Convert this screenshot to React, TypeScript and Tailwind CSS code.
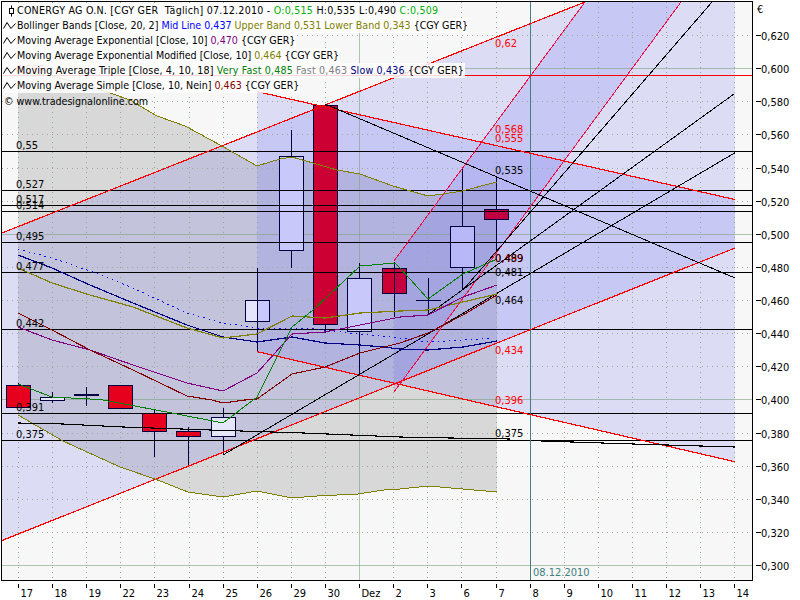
import React from 'react';

// day columns on the time axis
const days = ['17', '18', '19', '22', '23', '24', '25', '26', '29', '30', 'Dez', '2', '3', '6', '7', '8', '9', '10', '11', '12', '13', '14'];
const dayX = (i: number) => Math.floor(18.4 + 34.12 * i) + 0.5;
const priceY = (k: number) => Math.round(565 - 33.125 * k) + 0.5;
const prices = ['0,300', '0,320', '0,340', '0,360', '0,380', '0,400', '0,420', '0,440', '0,460', '0,480', '0,500', '0,520', '0,540', '0,560', '0,580', '0,600', '0,620'];

const OVERLAY = 'rgba(100,100,240,0.178)';

const upperBand = '18,72 52,76 93,87 130,100 157,116 185,126 222,146 257,166 280,159 292,157 313,163 337,170 360,174 393,186 428,196 443,194 462,191 497,182';
const lowerBand = '497,492 463,489 428,486 400,489 390,489 358,494 317,496 292,498 257,491 223,497 188,492 155,479 120,467 63,441 18,415';

const curves: { stroke: string; points: string; width?: number; dash?: string }[] = [
  { stroke: '#808000', points: upperBand },
  { stroke: '#808000', points: lowerBand },
  { stroke: '#000080', width: 1.2, points: '18,255 52,268 90,285 133,303 187,325 223,337 257,342 292,337 325,343 360,345 383,347 400,349 428,350 463,347 497,341' },
  { stroke: '#0000ff', dash: '1.5 4', points: '18,249 52,258 90,271 133,288 187,313 223,323 257,328 307,328 350,333 400,338 428,342 463,340 493,338' },
  { stroke: '#808000', width: 1.2, points: '18,268 52,283 90,295 133,307 187,328 223,338 257,334 292,316 325,318 360,313 400,311 428,310 463,302 497,294' },
  { stroke: '#800080', width: 1.1, points: '18,327 52,340 90,350 133,365 187,383 223,391 257,373 292,334 325,332 360,325 400,317 428,315 463,297 497,285' },
  { stroke: '#800000', width: 1.1, points: '18,313 52,330 90,350 133,370 187,396 212,400 223,403 245,400 257,399 292,374 325,367 360,353 400,343 428,333 463,315 497,295' },
  { stroke: '#008000', points: '18,384 52,397 90,399 103,400 172,413 223,423 257,397 292,327 313,310 360,266 395,263 400,268 428,299 463,274 497,259' },
  { stroke: '#000000', width: 1.1, points: '18,423 63,424 123,427 210,430 303,433 400,437 450,438 510,439' },
  { stroke: '#000000', width: 1.1, points: '541,441 633,444 735,447' },
];

const trendLines: { stroke: string; width: number; from: [number, number]; to: [number, number] }[] = [
  { stroke: '#ff0000', width: 1.2, from: [2, 233], to: [585, 2] },
  { stroke: '#ff0000', width: 1.2, from: [2, 540.5], to: [735, 248] },
  { stroke: '#ff0000', width: 1.2, from: [257, 91.6], to: [735, 199.5] },
  { stroke: '#ff0000', width: 1.2, from: [257, 351.6], to: [735, 461.7] },
  { stroke: '#f01048', width: 1, from: [394, 261], to: [585, 2] },
  { stroke: '#f01048', width: 1, from: [394, 392], to: [681, 2] },
  { stroke: '#000000', width: 1, from: [223, 455], to: [735, 152.7] },
  { stroke: '#000000', width: 1, from: [429, 314], to: [734, 94] },
  { stroke: '#000000', width: 1, from: [463, 290], to: [712, 2] },
  { stroke: '#000000', width: 1, from: [325, 104], to: [735, 278] },
];

const levels = [151.5, 190.5, 205.5, 211.5, 242.5, 272.5, 329.5, 413.5, 440.5];

const chartLabels: { x: number; y: number; text: string; red?: boolean }[] = [
  { x: 16, y: 73, text: '0,596', red: true },
  { x: 16, y: 149, text: '0,55' },
  { x: 16, y: 188, text: '0,527' },
  { x: 16, y: 203, text: '0,517' },
  { x: 16, y: 209, text: '0,514' },
  { x: 16, y: 240, text: '0,495' },
  { x: 16, y: 270, text: '0,477' },
  { x: 16, y: 327, text: '0,442' },
  { x: 16, y: 411, text: '0,391' },
  { x: 16, y: 438, text: '0,375' },
  { x: 495, y: 47, text: '0,62', red: true },
  { x: 495, y: 133, text: '0,568', red: true },
  { x: 495, y: 142, text: '0,555', red: true },
  { x: 495, y: 174, text: '0,535' },
  { x: 495, y: 262, text: '0,499', red: true },
  { x: 495, y: 262, text: '0,489' },
  { x: 495, y: 276, text: '0,481' },
  { x: 495, y: 304, text: '0,464' },
  { x: 495, y: 354, text: '0,434', red: true },
  { x: 495, y: 404, text: '0,396', red: true },
  { x: 495, y: 437, text: '0,375' },
];

type Candle = { x: number; top: number; bottom: number; high: number; low: number; fill: string; half?: string };

const candles: Candle[] = [
  { x: 18, top: 385, bottom: 407, high: 383, low: 407, fill: '#e6001e' },
  { x: 52, top: 397, bottom: 400, high: 392, low: 403, fill: '#e6e6fb' },
  { x: 86, top: 394, bottom: 395, high: 387, low: 406, fill: '#000000' },
  { x: 120, top: 385, bottom: 408, high: 385, low: 408, fill: '#e6001e' },
  { x: 154, top: 413, bottom: 431, high: 410, low: 457, fill: '#e6001e' },
  { x: 188, top: 431, bottom: 436, high: 427, low: 465, fill: '#e6001e' },
  { x: 223, top: 417, bottom: 436, high: 408, low: 455, fill: '#e6e6fb' },
  { x: 257, top: 300, bottom: 321, high: 268, low: 352, fill: '#c8c8fa', half: '#e4e4fc' },
  { x: 291, top: 156, bottom: 250, high: 130, low: 268, fill: '#c8c8fa' },
  { x: 325, top: 105, bottom: 324, high: 105, low: 333, fill: '#cc0033' },
  { x: 359, top: 278, bottom: 331, high: 263, low: 375, fill: '#c8c8fa' },
  { x: 394, top: 268, bottom: 293, high: 262, low: 317, fill: '#c40040', half: '#cc0033' },
  { x: 428, top: 300, bottom: 300, high: 278, low: 315, fill: '#000000' },
  { x: 462, top: 226, bottom: 267, high: 168, low: 290, fill: '#b8b8f8' },
  { x: 496, top: 209, bottom: 219, high: 177, low: 250, fill: '#c00040' },
];

const CandleMark: React.FC<{ c: Candle }> = ({ c }) => (
  <g shapeRendering="crispEdges">
    <line x1={c.x + 0.5} x2={c.x + 0.5} y1={c.high} y2={c.low} stroke="#000040" />
    {c.top === c.bottom ? (
      <line x1={c.x - 12} x2={c.x + 13} y1={c.top + 0.5} y2={c.top + 0.5} stroke="#000040" />
    ) : (
      <>
        {c.half && <rect x={c.x - 12} y={c.top} width={12} height={c.bottom - c.top} fill={c.half} />}
        <rect
          x={c.half ? c.x + 0.5 : c.x - 11.5}
          y={c.top + 0.5}
          width={c.half ? 12 : 24}
          height={c.bottom - c.top}
          fill={c.fill}
        />
        <rect x={c.x - 11.5} y={c.top + 0.5} width={24} height={c.bottom - c.top} fill="none" stroke="#000040" />
      </>
    )}
  </g>
);

const Squiggle = () => (
  <svg viewBox="0 0 14 15" className="w-[14px] h-[15px] shrink-0">
    <polyline points="0.5,10.5 4,4.5 8,10.5 12.5,5.5" fill="none" stroke="#000000" />
  </svg>
);

const LegendRow: React.FC<{ children: React.ReactNode }> = ({ children }) => (
  <div className="flex items-center h-[15px] w-fit pl-[1px] pr-[1px] bg-white/85 whitespace-pre">
    <Squiggle />
    <span>{children}</span>
  </div>
);

const Legend = () => (
  <div className="absolute top-px left-0 flex flex-col text-[10.6px] leading-[15px] text-black">
    <div className="flex items-center h-[15px] w-fit pl-[1px] pr-[1px] bg-white/85 whitespace-pre">
      <svg viewBox="0 0 14 15" className="w-[14px] h-[15px] shrink-0">
        <path d="M8.5 2.5V13.5" stroke="#000000" fill="none" />
        <rect x="6.5" y="5.5" width="4" height="5" fill="#ffffff" stroke="#000000" />
      </svg>
      <span className="tracking-[0.23px]">
        CONERGY AG O.N. [CGY GER  Täglich] 07.12.2010 - <span className="text-[#00b000]">O:0,515</span> H:0,535 L:0,490{' '}
        <span className="text-[#00b000]">C:0,509</span>
      </span>
    </div>
    <LegendRow>
      Bollinger Bands [Close, 20, 2] <span className="text-[#0000ff]">Mid Line 0,437</span>{' '}
      <span className="text-[#808000]">Upper Band 0,531 Lower Band 0,343</span> {'{CGY GER}'}
    </LegendRow>
    <LegendRow>
      Moving Average Exponential [Close, 10] <span className="text-[#800080]">0,470</span> {'{CGY GER}'}
    </LegendRow>
    <LegendRow>
      Moving Average Exponential Modified [Close, 10] <span className="text-[#808000]">0,464</span> {'{CGY GER}'}
    </LegendRow>
    <LegendRow>
      <span className="tracking-[0.17px]">
        Moving Average Triple [Close, 4, 10, 18] <span className="text-[#008000]">Very Fast 0,485</span>{' '}
        <span className="text-[#808080]">Fast 0,463</span> <span className="text-[#000080]">Slow 0,436</span> {'{CGY GER}'}
      </span>
    </LegendRow>
    <LegendRow>
      Moving Average Simple [Close, 10, Nein] <span className="text-[#800000]">0,463</span> {'{CGY GER}'}
    </LegendRow>
    <div className="h-[15px] mt-px pl-[2px] whitespace-pre">© www.tradesignalonline.com</div>
  </div>
);

const Plot = () => (
  <svg viewBox="2 2 750 578" className="absolute inset-0 w-[750px] h-[578px]">
    <polygon points={`${upperBand} ${lowerBand}`} fill="rgba(0,0,0,0.125)" />
    <polygon points="2,233 585,2 735,2 735,248 2,540.5" fill={OVERLAY} />
    <polygon points="257,91.6 735,199.5 735,461.7 257,351.6" fill={OVERLAY} />
    <polygon points="394,261 585,2 681,2 394,392" fill={OVERLAY} />

    <g shapeRendering="crispEdges">
      {days.map((d, i) =>
        d === 'Dez' || d === '8' ? null : (
          <line key={d} x1={dayX(i)} x2={dayX(i)} y1={2} y2={580} stroke="#90a890" strokeDasharray="1 4" />
        )
      )}
      {prices.map((p, k) =>
        k % 5 === 0 ? (
          <line key={p} x1={2} x2={752} y1={priceY(k)} y2={priceY(k)} stroke="#80a080" strokeOpacity={0.6} />
        ) : (
          <line key={p} x1={2} x2={752} y1={priceY(k)} y2={priceY(k)} stroke="#a0a8a0" strokeDasharray="1 4" />
        )
      )}
      <line x1={359.5} x2={359.5} y1={2} y2={580} stroke="#80a080" strokeOpacity={0.6} />
    </g>

    {candles.map((c) => (
      <CandleMark key={c.x} c={c} />
    ))}

    <g shapeRendering="crispEdges">
      <line x1={2} x2={752} y1={75.5} y2={75.5} stroke="#ff0000" />
      {levels.map((y) => (
        <line key={y} x1={2} x2={752} y1={y} y2={y} stroke="#000000" />
      ))}
      <line x1={530.5} x2={530.5} y1={2} y2={580} stroke="#408080" />
      {trendLines.map((l, i) => (
        <line key={i} x1={l.from[0]} y1={l.from[1]} x2={l.to[0]} y2={l.to[1]} stroke={l.stroke} strokeWidth={l.width} />
      ))}
      {curves.map((c, i) => (
        <polyline
          key={i}
          points={c.points}
          fill="none"
          stroke={c.stroke}
          strokeWidth={c.width ?? 1}
          strokeDasharray={c.dash}
        />
      ))}
    </g>

    {chartLabels.map((l, i) => (
      <text key={i} x={l.x} y={l.y} fontSize={11} fill={l.red ? '#ff0000' : '#000000'}>
        {l.text}
      </text>
    ))}
    <text x={533} y={576} fontSize={11} fill="#408080">
      08.12.2010
    </text>
  </svg>
);

const TimeAxis = () => (
  <svg viewBox="1 581 752 19" className="w-[752px] h-[19px]">
    {days.map((d, i) => (
      <g key={d}>
        <line x1={dayX(i)} x2={dayX(i)} y1={584} y2={588} stroke="#000000" shapeRendering="crispEdges" />
        <text x={dayX(i) + 2} y={597} fontSize={11} fill="#000000">
          {d}
        </text>
      </g>
    ))}
  </svg>
);

const PriceAxis = () => (
  <svg viewBox="753 1 47 599" className="w-[47px] h-[599px]">
    <text x={757} y={13} fontSize={11} fill="#000000">
      €
    </text>
    {prices.map((p, k) => (
      <g key={p}>
        <line x1={756} x2={761} y1={priceY(k)} y2={priceY(k)} stroke="#000000" shapeRendering="crispEdges" />
        <text x={761} y={priceY(k) + 4} fontSize={11} fill="#000000">
          {p}
        </text>
      </g>
    ))}
  </svg>
);

export default function App() {
  return (
    <div className="w-[800px] h-[600px] bg-white flex pl-px pt-px font-['DejaVu_Sans_Condensed','Liberation_Sans',sans-serif] overflow-hidden">
      <div className="flex flex-col w-[752px]">
        <div className="relative w-[752px] h-[580px] border border-black bg-[#f6f7f6] overflow-hidden">
          <Plot />
          <Legend />
        </div>
        <TimeAxis />
      </div>
      <PriceAxis />
    </div>
  );
}
